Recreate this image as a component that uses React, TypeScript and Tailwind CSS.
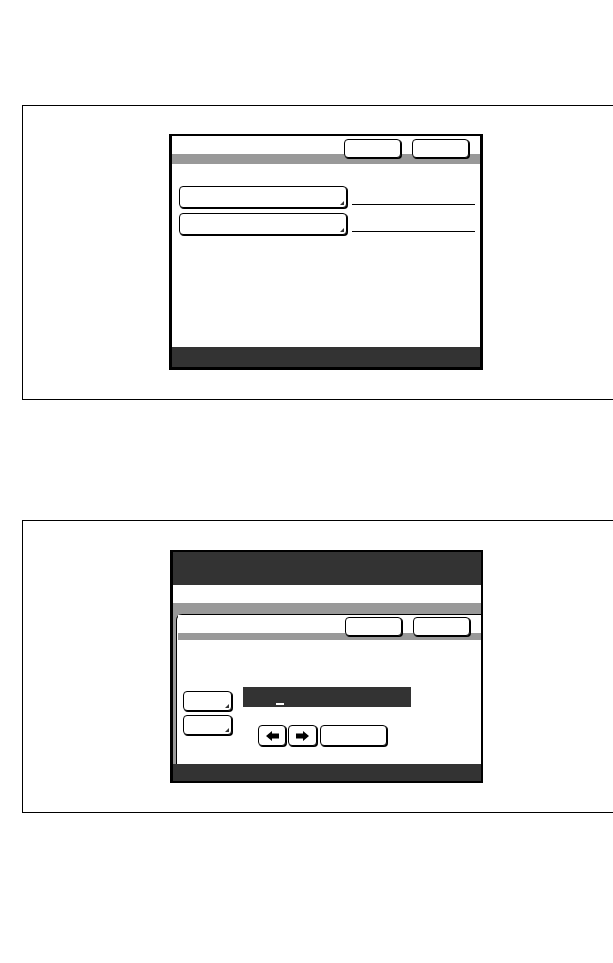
import React from 'react';

function Key({ className = '', corner = false, children }: { className?: string; corner?: boolean; children?: React.ReactNode }) {
  return (
    <div
      className={`relative flex items-center justify-center rounded-[4px] border border-black bg-white shadow-[1px_1px_0_#000] ${className}`}
    >
      {children}
      {corner && (
        <span className="absolute right-[2px] bottom-[2px] h-0 w-0 border-b-[4px] border-l-[4px] border-b-[#333] border-l-transparent" />
      )}
    </div>
  );
}

function Arrow({ dir }: { dir: 'left' | 'right' }) {
  return (
    <svg width="13" height="10" viewBox="0 0 13 10" className={dir === 'right' ? 'rotate-180' : ''}>
      <path d="M0 5 L6 0 L6 2.5 L13 2.5 L13 7.5 L6 7.5 L6 10 Z" fill="#000" />
    </svg>
  );
}

export default function App() {
  return (
    <div className="h-[963px] w-[613px] overflow-hidden bg-white pt-[105px]">
      {/* Panel 1 */}
      <div className="ml-[22px] h-[295px] w-[620px] border-t border-b border-l border-black pt-[28px] pl-[146px]">
        <div className="flex h-[236px] w-[314px] flex-col border-t-2 border-r-[3px] border-b-[3px] border-l-[3px] border-black">
          <div className="flex h-[28px] justify-end gap-[11px] bg-[linear-gradient(to_bottom,#fff_18px,#999_18px)] pt-[3px] pr-[11px]">
            <Key className="h-[19px] w-[57px]" />
            <Key className="h-[19px] w-[57px]" />
          </div>
          <div className="flex flex-1 flex-col gap-[5px] pt-[22px] pl-[7px]">
            <div className="flex items-end">
              <Key corner className="h-[22px] w-[168px]" />
              <div className="mb-[3px] ml-[5px] h-px w-[123px] bg-black" />
            </div>
            <div className="flex items-end">
              <Key corner className="h-[22px] w-[168px]" />
              <div className="mb-[3px] ml-[5px] h-px w-[123px] bg-black" />
            </div>
          </div>
          <div className="h-[20px] bg-[#333]" />
        </div>
      </div>

      {/* Panel 2 */}
      <div className="mt-[120px] ml-[22px] h-[293px] w-[620px] border-t border-b border-l border-black pt-[29px] pl-[147px]">
        <div className="flex h-[233px] w-[313px] flex-col border-t-2 border-r-2 border-b-2 border-l-[3px] border-black">
          <div className="h-[33px] bg-[#333]" />
          <div className="h-[18px] bg-white" />
          <div className="bg-[#999] pt-[11px] pl-[3px]">
            <div className="rounded-tl-[6px] border-t border-l border-black bg-white">
              <div className="ml-[1px] flex h-[25px] justify-end gap-[11px] bg-[linear-gradient(to_bottom,#fff_18px,#999_18px)] pt-[2px] pr-[11px]">
                <Key className="h-[19px] w-[57px]" />
                <Key className="h-[19px] w-[57px]" />
              </div>
              <div className="flex h-[124px]">
                <div className="flex flex-col gap-[4px] pt-[51px] pl-[6px]">
                  <Key corner className="h-[20px] w-[49px]" />
                  <Key corner className="h-[20px] w-[49px]" />
                </div>
                <div className="flex flex-col pt-[47px] pl-[11px]">
                  <div className="flex h-[20px] w-[168px] items-end bg-[#333] pb-[2px] pl-[33px]">
                    <div className="h-[2px] w-[8px] bg-white" />
                  </div>
                  <div className="mt-[18px] flex gap-[2px] pl-[15px]">
                    <Key className="h-[21px] w-[28px]">
                      <Arrow dir="left" />
                    </Key>
                    <Key className="h-[21px] w-[29px]">
                      <Arrow dir="right" />
                    </Key>
                    <Key className="ml-[1px] h-[21px] w-[67px]" />
                  </div>
                </div>
              </div>
            </div>
          </div>
          <div className="flex-1 bg-[#333]" />
        </div>
      </div>
    </div>
  );
}
